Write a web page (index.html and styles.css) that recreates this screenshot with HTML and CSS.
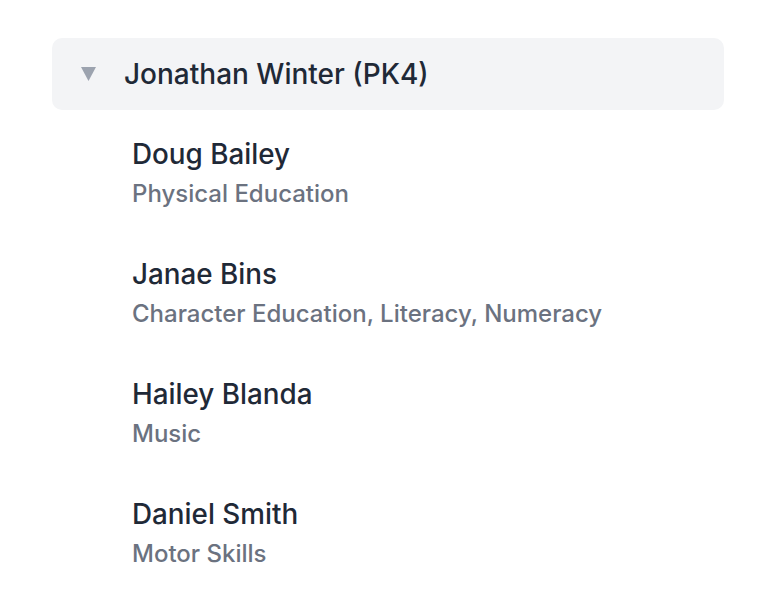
FILE: index.html
```html
<!DOCTYPE html>
<html>
<head>
<meta charset="utf-8">
<link rel="stylesheet" href="styles.css">
</head>
<body>
<div class="group">
  <div class="group-header">
    <svg class="caret" width="15" height="14" viewBox="0 0 15 14"><path d="M0 0 H15 L7.5 14 Z" fill="#9ca3af"/></svg>
    <span class="group-title">Jonathan Winter (PK4)</span>
  </div>
  <ul class="people">
    <li class="person"><div class="name">Doug Bailey</div><div class="subjects">Physical Education</div></li>
    <li class="person"><div class="name">Janae Bins</div><div class="subjects">Character Education, Literacy, Numeracy</div></li>
    <li class="person"><div class="name">Hailey Blanda</div><div class="subjects">Music</div></li>
    <li class="person"><div class="name">Daniel Smith</div><div class="subjects">Motor Skills</div></li>
  </ul>
</div>
</body>
</html>
```
FILE: styles.css
```css
html, body { margin: 0; padding: 0; background: #fff; }
body { font-family: Inter, "Noto Sans", sans-serif; }
.group { margin: 38px 36px 0 52px; }
.group-header {
  height: 72px;
  background: #f3f4f6;
  border-radius: 10px;
  display: flex;
  align-items: center;
  padding-left: 29px;
  gap: 28px;
}
.caret { display: block; }
.group-title { font-size: 28px; font-weight: 500; color: #1f2937; }
.people { list-style: none; margin: 0; padding: 28px 0 0 80px; }
.person { height: 120px; }
.name { font-size: 27.8px; font-weight: 500; color: #1f2937; line-height: 33px; }
.subjects { font-size: 24px; font-weight: 500; color: #6b7280; line-height: 36px; margin-top: 5px; }
```
